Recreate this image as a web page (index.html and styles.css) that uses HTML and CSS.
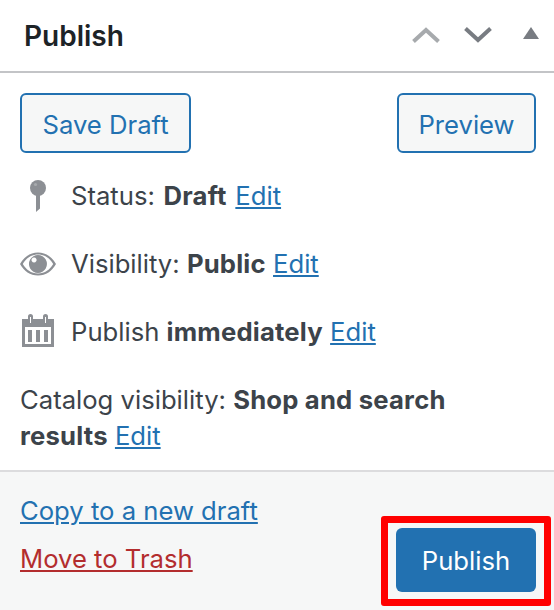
FILE: index.html
```html
<!DOCTYPE html>
<html lang="en">
<head>
<meta charset="utf-8">
<title>Publish</title>
<link rel="stylesheet" href="styles.css">
</head>
<body>
<section class="box">
  <header class="head">
    <h2 class="title">Publish</h2>
    <div class="controls">
      <svg class="ctl-chev" viewBox="0 0 28 16" aria-hidden="true"><path d="M1.500 14.500 14 3 26.500 14.500" fill="none" stroke="#a7aaad" stroke-width="4"/></svg>
      <svg class="ctl-chev" viewBox="0 0 28 16" aria-hidden="true"><path d="M1.500 1.500 14 13 26.500 1.500" fill="none" stroke="#787c82" stroke-width="4"/></svg>
      <svg class="ctl-tri" viewBox="0 0 16 12" aria-hidden="true"><path d="M8 0 16 12H0Z" fill="#787c82"/></svg>
    </div>
  </header>
  <div class="body">
    <div class="actions">
      <button class="btn btn-draft">Save Draft</button>
      <button class="btn btn-preview">Preview</button>
    </div>
    <div class="row">
      <span class="ico"><svg width="16" height="32" viewBox="0 0 16 32" aria-hidden="true"><circle cx="8" cy="8" r="8" fill="#8c8f94"/><circle cx="5.500" cy="4.500" r="1.600" fill="#a7aaad"/><path d="M6 14H10V28.500L6 32Z" fill="#8c8f94"/></svg></span>
      <span class="txt status">Status: <b>Draft</b> <a href="#">Edit</a></span>
    </div>
    <div class="row">
      <span class="ico"><svg width="36" height="24" viewBox="0 0 36 24" aria-hidden="true"><path fill-rule="evenodd" d="M0 12C4 5 10 .5 18 .5S32 5 36 12C32 19 26 23.500 18 23.500S4 19 0 12ZM2.800 12C6 17.500 11 21.500 18 21.500S30 17.500 33.200 12C30 6.500 25 2.500 18 2.500S6 6.500 2.800 12Z" fill="#8c8f94"/><path fill-rule="evenodd" d="M18 3A9 9 0 1 1 17.900 3ZM14 5.500A2.500 2.500 0 1 0 14.100 5.500Z" fill="#8c8f94"/></svg></span>
      <span class="txt">Visibility: <b>Public</b> <a href="#">Edit</a></span>
    </div>
    <div class="row">
      <span class="ico ico-cal"><svg width="32" height="33" viewBox="0 0 32 33" aria-hidden="true"><path fill-rule="evenodd" d="M0 5H6V2.500A2.500 2.500 0 0 1 11 2.500V5H21V2.500A2.500 2.500 0 0 1 26 2.500V5H32V33H0ZM8 3V9H9V3ZM23 3V9H24V3ZM3 13V30H29V13Z" fill="#8c8f94"/><path d="M6 16H10V28H6ZM14 16H18V28H14ZM22 16H26V28H22Z" fill="#8c8f94"/></svg></span>
      <span class="txt">Publish <b>immediately</b> <a href="#">Edit</a></span>
    </div>
    <p class="catalog">Catalog visibility: <b>Shop and search results</b> <a href="#">Edit</a></p>
  </div>
  <footer class="foot">
    <div class="links">
      <a href="#">Copy to a new draft</a>
      <a href="#" class="trash">Move to Trash</a>
    </div>
    <button class="primary">Publish</button>
    <div class="mark"></div>
  </footer>
</section>
</body>
</html>
```
FILE: styles.css
```css
* { box-sizing: border-box; }
html, body { margin: 0; height: 100%; background: #fff; overflow: hidden; }
body { font-family: Inter, "Liberation Sans", sans-serif; font-size: 25.65px; color: #3c434a; }
.box { display: flex; flex-direction: column; height: 610px; }
.head { height: 73px; flex: none; display: flex; align-items: center; justify-content: space-between; padding: 0 15px 0 24px; border-bottom: 2px solid #c3c4c7; }
.title { margin: 0; font-size: 28px; font-weight: 600; color: #1d2327; }
.controls { display: flex; align-items: center; gap: 24px; height: 40px; margin-top: -2px; }
.ctl-chev { width: 28px; height: 16px; display: block; }
.ctl-tri { width: 16px; height: 12px; display: block; margin-left: 7px; margin-top: -4px; }
.body { flex: 1; padding: 20px 18px 0 20px; }
.actions { display: flex; justify-content: space-between; }
.btn { height: 60px; padding: 2px 0 0; font: inherit; color: #2271b1; background: #f6f7f7; border: 2px solid #2271b1; border-radius: 6px; }
.btn-draft { width: 171px; }
.btn-preview { width: 139px; }
.row { display: flex; align-items: center; height: 68px; }
.actions + .row { margin-top: 9px; }
.ico { width: 51px; flex: none; display: flex; justify-content: center; padding-right: 15px; }
.ico-cal { padding-bottom: 3px; }
.txt { padding-bottom: 2px; }
.status { word-spacing: 1.500px; }
a { color: #2271b1; text-decoration: underline; }
b { font-weight: 700; letter-spacing: .2px; }
.catalog { margin: 0; padding: 16px 20px 0 0; line-height: 36px; }
.foot { height: 140px; flex: none; position: relative; display: flex; justify-content: space-between; padding: 21px 18px 0 20px; background: #f6f7f7; border-top: 2px solid #dcdcde; }
.links { display: flex; flex-direction: column; gap: 12px; line-height: 36px; }
.trash { color: #b32d2e; }
.primary { width: 140px; height: 64px; margin-top: 35px; padding-top: 2px; font: inherit; color: #fff; background: #2271b1; border: 0; border-radius: 6px; }
.mark { position: absolute; left: 381px; top: 44px; width: 170px; height: 90px; border: 7px solid #f00; border-radius: 3px; }
```
